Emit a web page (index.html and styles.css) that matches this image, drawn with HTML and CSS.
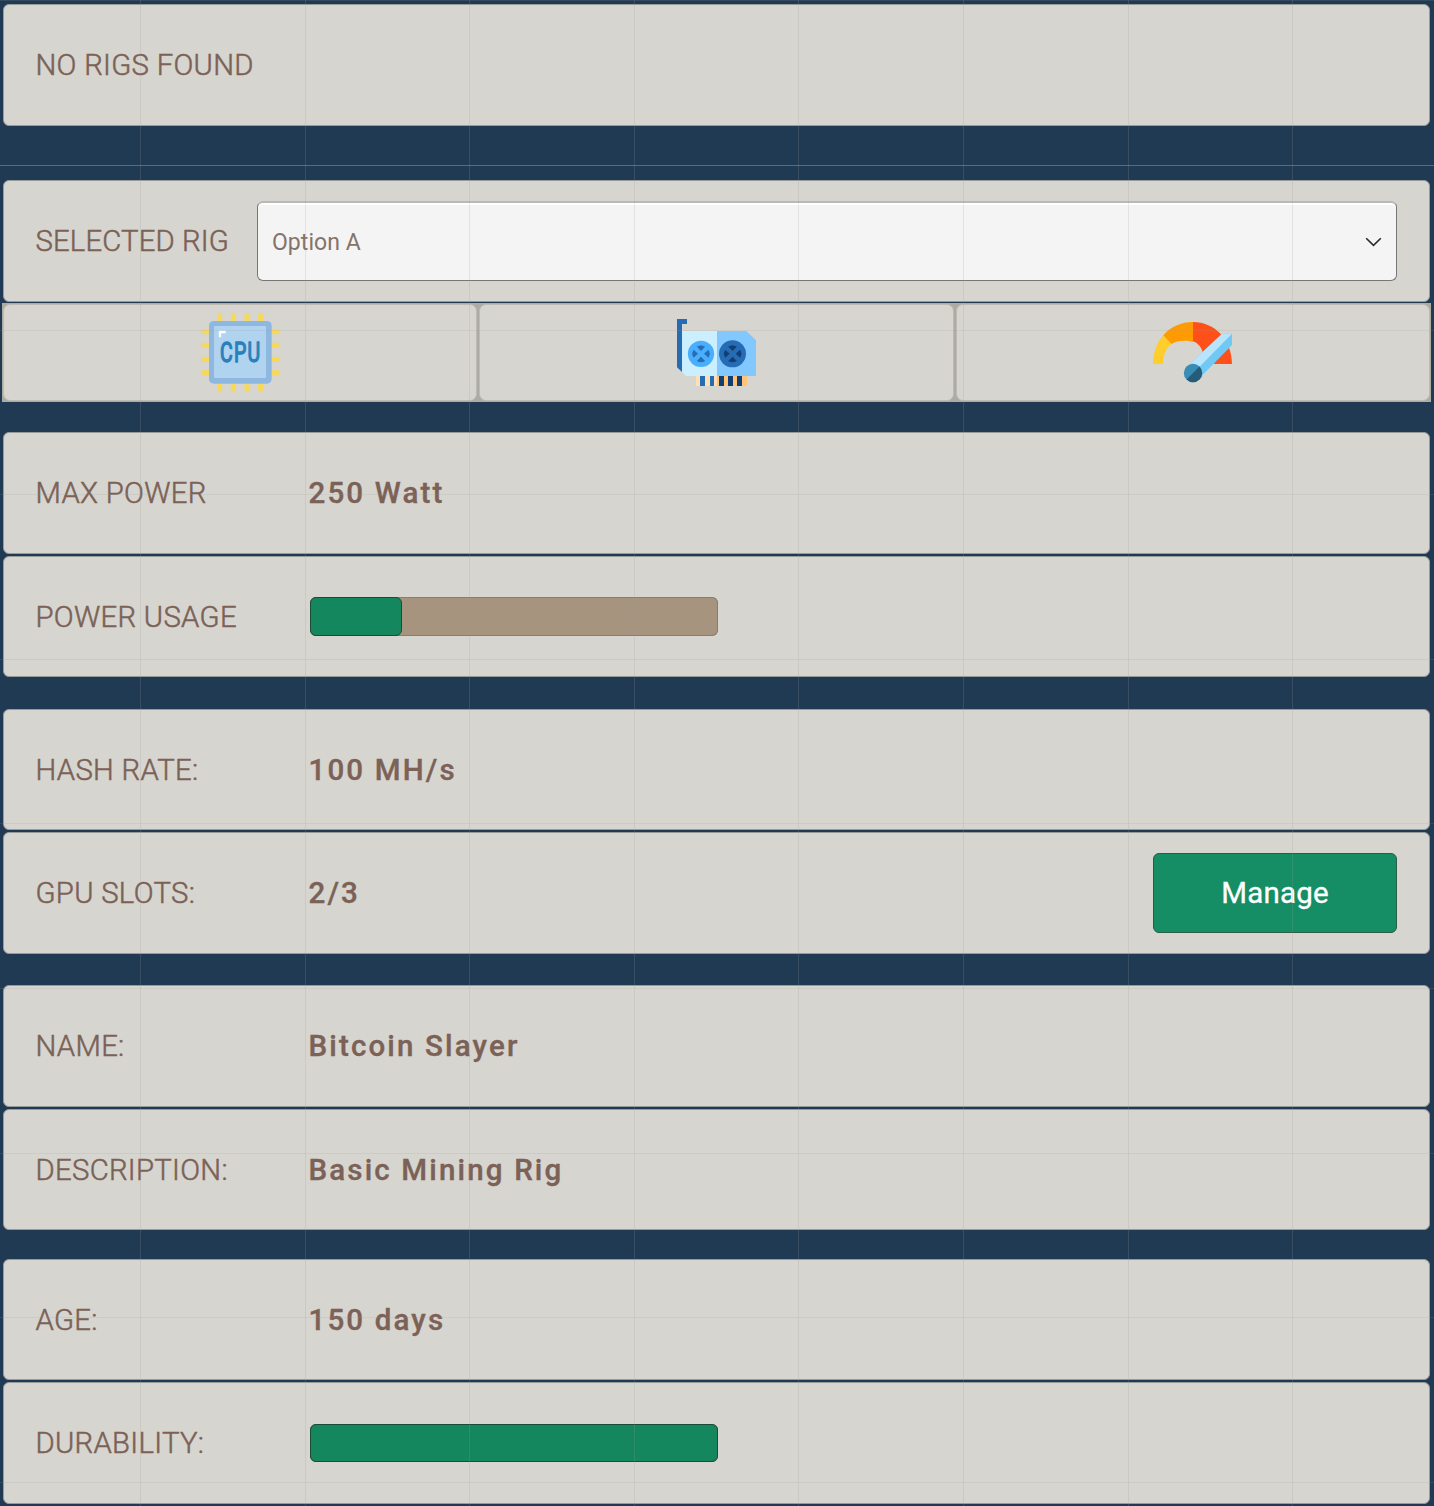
FILE: index.html
```html
<!DOCTYPE html>
<html lang="en">
<head>
<meta charset="utf-8">
<title>Mining Rigs</title>
<link rel="stylesheet" href="styles.css">
</head>
<body>
<main class="app">
  <section class="panel"><span class="label">NO RIGS FOUND</span></section>
  <hr class="divider">
  <section class="panel panel-select">
    <span class="label">SELECTED RIG</span>
    <div class="select">
      <span class="option">Option A</span>
      <svg width="18" height="12" viewBox="0 0 18 12" fill="none" stroke="#2b2b2b" stroke-width="1.6"><path d="M2.200 2.200 9.500 9.400l7.300-7.200"/></svg>
    </div>
  </section>
  <nav class="tabs">
    <div class="tab">
      <svg class="icon" viewBox="33 39 237 237">
        <path d="M89 46v222M130 46v222M171 46v222M212 46v222M40 95h223M40 136h223M40 178h223M40 218h223" stroke="#f6d95b" stroke-width="15" stroke-linecap="round"/>
        <rect x="57" y="63" width="188" height="188" rx="14" fill="#8fb8e0"/>
        <rect x="72" y="78" width="156" height="156" rx="4" fill="#b0d3f0"/>
        <path d="M90 112V96h17" fill="none" stroke="#fff" stroke-width="7"/>
        <text class="chip" x="90" y="185" textLength="124" lengthAdjust="spacingAndGlyphs">CPU</text>
      </svg>
    </div>
    <div class="tab">
      <svg class="icon" viewBox="36 39 237 237">
        <path d="M36 57h30v15H51v144l-15-14z" fill="#266cb4"/>
        <path d="M51 93h105v135H63l-12-12z" fill="#cbefff"/>
        <path d="M156 93h88l29 28v107H156z" fill="#82c8ff"/>
        <path d="M93 228h63v30H93z" fill="#ffe0b5"/>
        <path d="M156 228h90v30h-90z" fill="#ffc477"/>
        <path d="M105 228h15v30h-15zM135 228h12v30h-12z" fill="#266cb4"/>
        <path d="M162 228h15v30h-15zM189 228h15v30h-15zM216 228h15v30h-15z" fill="#113f73"/>
        <circle cx="108" cy="161.500" r="39.500" fill="#4aaeff"/>
        <circle cx="202.500" cy="161.500" r="40.500" fill="#266cb4"/>
        <path d="M97 140q11-6 22 0l-11 12zM97 183q11 6 22 0l-11-12zM86 151q-7 10 0 21l12-11zM130 151q7 10 0 21l-12-11z" fill="#266cb4" stroke="#266cb4" stroke-width="2"/>
        <path d="M191 140q11-6 23 0l-11 12zM191 183q11 6 23 0l-11-12zM181 151q-7 10 0 21l12-11zM225 151q7 10 0 21l-12-11z" fill="#113f73" stroke="#113f73" stroke-width="2"/>
      </svg>
    </div>
    <div class="tab">
      <svg class="icon" viewBox="39 39 237 237">
        <path d="M39 192C39 158 50 130 70 106l27 24C80 142 69 164 69 192z" fill="#ffcd2c"/>
        <path d="M70 106C92 80 124 66 159 66v60c-20-6-47-5-64 6z" fill="#ff9b00"/>
        <path d="M159 66c65 0 117 53 117 126h-53l-35-37c-5-15-15-26-29-31z" fill="#ff5019"/>
        <path d="M152 190 246 101h30v34l-91 93z" fill="#70c8f4"/>
        <path d="M152 190 246 101h30l-103 105z" fill="#b8e5fb"/>
        <circle cx="159" cy="219" r="27.500" fill="#388cb5"/>
        <path d="M178.500 199.500a27.500 27.500 0 0 1-39 39z" fill="#265c78"/>
      </svg>
    </div>
  </nav>
  <section class="group group-power">
    <div class="panel"><span class="label">MAX POWER</span><span class="value">250 Watt</span></div>
    <div class="panel panel-short"><span class="label">POWER USAGE</span><div class="bar bar-tall"><div class="fill" style="width:92px"></div></div></div>
  </section>
  <section class="group group-hash">
    <div class="panel panel-short"><span class="label">HASH RATE:</span><span class="value">100 MH/s</span></div>
    <div class="panel"><span class="label">GPU SLOTS:</span><span class="value">2/3</span><button class="button">Manage</button></div>
  </section>
  <section class="group group-info">
    <div class="panel"><span class="label">NAME:</span><span class="value">Bitcoin Slayer</span></div>
    <div class="panel panel-short"><span class="label">DESCRIPTION:</span><span class="value">Basic Mining Rig</span></div>
  </section>
  <section class="group group-age">
    <div class="panel panel-short"><span class="label">AGE:</span><span class="value">150 days</span></div>
    <div class="panel"><span class="label">DURABILITY:</span><div class="bar"><div class="fill" style="width:100%"></div></div></div>
  </section>
  <svg class="mesh" width="1434" height="1506" fill="none" stroke="#a09a9a">
    <path stroke-opacity=".2" d="M140.500 0v1506M305.500 0v1506M469.500 0v1506M634.500 0v1506M798.500 0v1506M963.500 0v1506M1128.500 0v1506M1292.500 0v1506"/>
    <path stroke-opacity=".17" d="M0 .5h1434M0 165.500h1434M0 330.500h1434M0 494.500h1434M0 659.500h1434M0 823.500h1434M0 988.500h1434M0 1153.500h1434M0 1317.500h1434M0 1482.500h1434"/>
  </svg>
</main>
</body>
</html>
```
FILE: styles.css
```css
* { box-sizing: border-box; }
body { margin: 0; background: #203a54; font-family: Roboto, sans-serif; color: #7b6156; }
.app { position: relative; height: 1506px; padding: 4px 4px 0 3px; overflow: hidden; }
.panel {
  display: grid;
  grid-template-columns: 273px 1fr auto;
  align-items: center;
  height: 122px;
  padding: 0 32px;
  border: 1px solid #969a99;
  border-radius: 6px;
  background: #d6d5cf;
}
.panel-short { height: 121px; }
.label { margin-left: -.5px; font-size: 29.3px; font-weight: 300; letter-spacing: .3px; line-height: 35px; white-space: nowrap; -webkit-text-stroke: .5px; }
.value { margin-left: -.5px; font-size: 29.5px; font-weight: 500; letter-spacing: 2.15px; line-height: 35px; -webkit-text-stroke: .35px; }
.panel-short .label, .panel-short .value { padding-top: 1px; }
.divider { height: 1px; margin: 39px -4px 14px -3px; border: 0; background: #526071; }
.panel-select { grid-template-columns: 221px 1fr; }
.panel-select .label { letter-spacing: .15px; }
.select {
  display: flex;
  align-items: center;
  justify-content: space-between;
  height: 80px;
  padding: 0 14px;
  border: 1px solid #777;
  border-top: 2px solid #b9b9b9;
  border-radius: 6px;
  background: #f4f4f4;
  box-shadow: inset 0 2px #fff;
  font-size: 23px;
  letter-spacing: .05px;
  color: #85736b;
}
.option { padding-top: 2px; }
.tabs {
  display: grid;
  grid-template-columns: repeat(3, 1fr);
  gap: 2px;
  height: 99px;
  margin: 1px -1px 0;
  padding: 1px;
  background: #acaba4;
}
.tab { display: grid; place-items: center; border: 1px solid #bcbab3; border-radius: 7px; background: #d6d5cf; }
.icon { width: 79px; height: 79px; }
.chip { font: 400 81px Roboto, sans-serif; letter-spacing: 5px; fill: #2980ba; stroke: #2980ba; stroke-width: 4px; stroke-linejoin: round; }
.group { display: grid; gap: 2px; }
.group-power { margin-top: 30px; }
.group-hash { margin-top: 32px; }
.group-info { margin-top: 31px; }
.group-age { margin-top: 29px; }
.bar { width: 408px; height: 38px; margin-left: 1px; border-radius: 6px; background: #a6947f; box-shadow: inset 0 0 0 1px #8a7c6e; }
.bar-tall { height: 39px; }
.fill { height: 100%; border: 1px solid #1b4c38; border-radius: 6px; background: #15875f; }
.button {
  width: 244px;
  height: 80px;
  padding: 0;
  border: 1px solid #2c5c48;
  border-radius: 6px;
  background: #158e65;
  color: #fff;
  font: 400 29.5px Roboto, sans-serif;
  letter-spacing: .2px;
  -webkit-text-stroke: .3px;
}
.mesh { position: absolute; top: 0; left: 0; pointer-events: none; }
```
